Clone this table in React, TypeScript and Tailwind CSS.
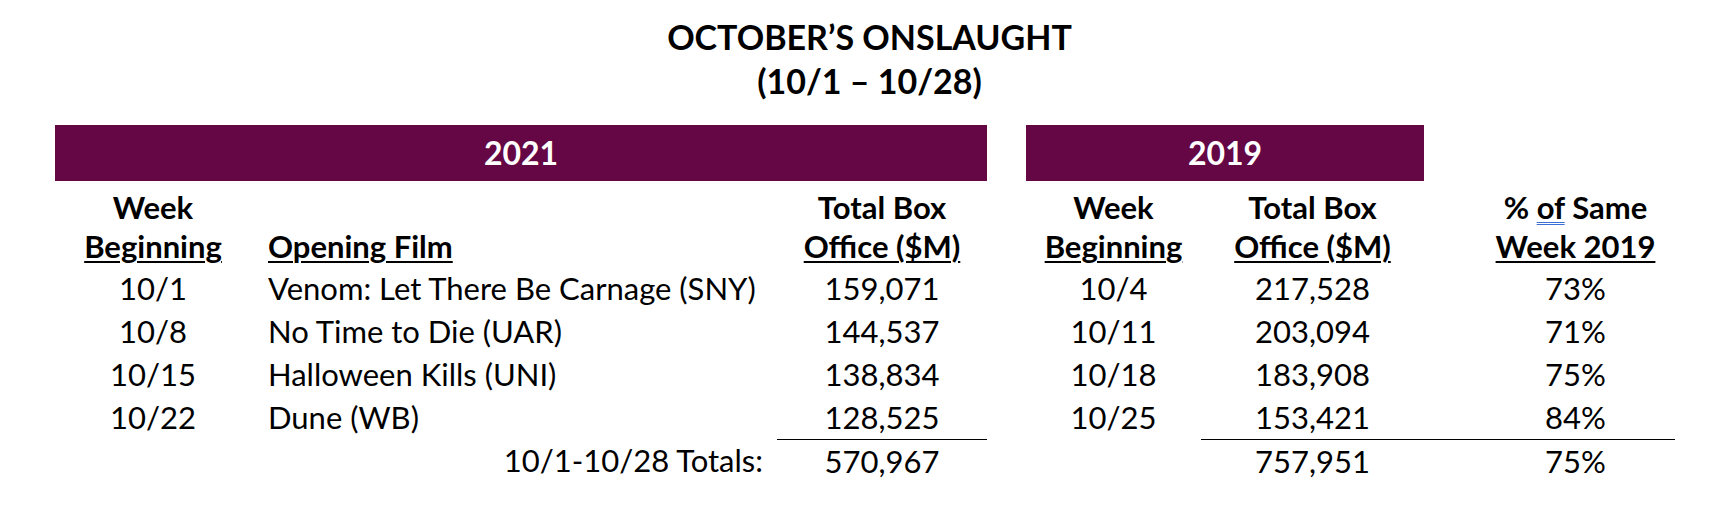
import React from "react";

const rows2021 = [
  { week: "10/1", film: "Venom: Let There Be Carnage (SNY)", total: "159,071" },
  { week: "10/8", film: "No Time to Die (UAR)", total: "144,537" },
  { week: "10/15", film: "Halloween Kills (UNI)", total: "138,834" },
  { week: "10/22", film: "Dune (WB)", total: "128,525" },
];

const rows2019 = [
  { week: "10/4", total: "217,528", pct: "73%" },
  { week: "10/11", total: "203,094", pct: "71%" },
  { week: "10/18", total: "183,908", pct: "75%" },
  { week: "10/25", total: "153,421", pct: "84%" },
];

export default function App() {
  return (
    <div className="w-[1727px] h-[507px] bg-white text-black font-['Lato',sans-serif]">
      <div className="pt-[15px] text-center font-bold text-[34px] leading-[44px]">
        <div className="pl-[12px]">OCTOBER’S ONSLAUGHT</div>
        <div className="pl-[12px]">(10/1 – 10/28)</div>
      </div>

      <div className="ml-[55px] mt-[22px] grid grid-cols-[196px_526px_210px_39px_175px_223px_251px] text-[31px]">
        {/* year bars */}
        <div className="col-span-3 h-[56px] bg-[#650645] text-white font-bold text-[32px] flex items-center justify-center">
          2021
        </div>
        <div />
        <div className="col-span-2 h-[56px] bg-[#650645] text-white font-bold text-[32px] flex items-center justify-center">
          2019
        </div>
        <div />

        {/* headers */}
        <div className="mt-[7px] mb-[1px] font-bold text-center leading-[39px]">
          <div>Week</div>
          <div className="underline decoration-2 underline-offset-[3px]">Beginning</div>
        </div>
        <div className="mt-[7px] mb-[1px] font-bold leading-[39px] pl-[17px]">
          <div>&nbsp;</div>
          <div className="underline decoration-2 underline-offset-[3px]">Opening Film</div>
        </div>
        <div className="mt-[7px] mb-[1px] font-bold text-center leading-[39px]">
          <div>Total Box</div>
          <div className="underline decoration-2 underline-offset-[3px]">Office ($M)</div>
        </div>
        <div />
        <div className="mt-[7px] mb-[1px] font-bold text-center leading-[39px]">
          <div>Week</div>
          <div className="underline decoration-2 underline-offset-[3px]">Beginning</div>
        </div>
        <div className="mt-[7px] mb-[1px] font-bold text-center leading-[39px]">
          <div>Total Box</div>
          <div className="underline decoration-2 underline-offset-[3px]">Office ($M)</div>
        </div>
        <div className="mt-[7px] mb-[1px] font-bold text-center leading-[39px] pl-[52px]">
          <div>
            %{" "}
            <span className="underline decoration-double decoration-[#3b6fd6] decoration-1 underline-offset-[3px]">of</span>{" "}
            Same
          </div>
          <div className="underline decoration-2 underline-offset-[3px]">Week 2019</div>
        </div>

        {/* data rows */}
        {rows2021.map((r, i) => (
          <React.Fragment key={r.week}>
            <div className="text-center leading-[43px]">{r.week}</div>
            <div className="pl-[17px] leading-[43px]">{r.film}</div>
            <div className="text-center leading-[43px]">{r.total}</div>
            <div />
            <div className="text-center leading-[43px]">{rows2019[i].week}</div>
            <div className="text-center leading-[43px]">{rows2019[i].total}</div>
            <div className="text-center leading-[43px] pl-[52px]">{rows2019[i].pct}</div>
          </React.Fragment>
        ))}

        {/* totals */}
        <div />
        <div className="text-right pr-[14px] leading-[43px]">10/1-10/28 Totals:</div>
        <div className="text-center leading-[43px] border-t border-black">570,967</div>
        <div />
        <div />
        <div className="text-center leading-[43px] border-t border-black">757,951</div>
        <div className="text-center leading-[43px] pl-[52px] border-t border-black">75%</div>
      </div>
    </div>
  );
}
